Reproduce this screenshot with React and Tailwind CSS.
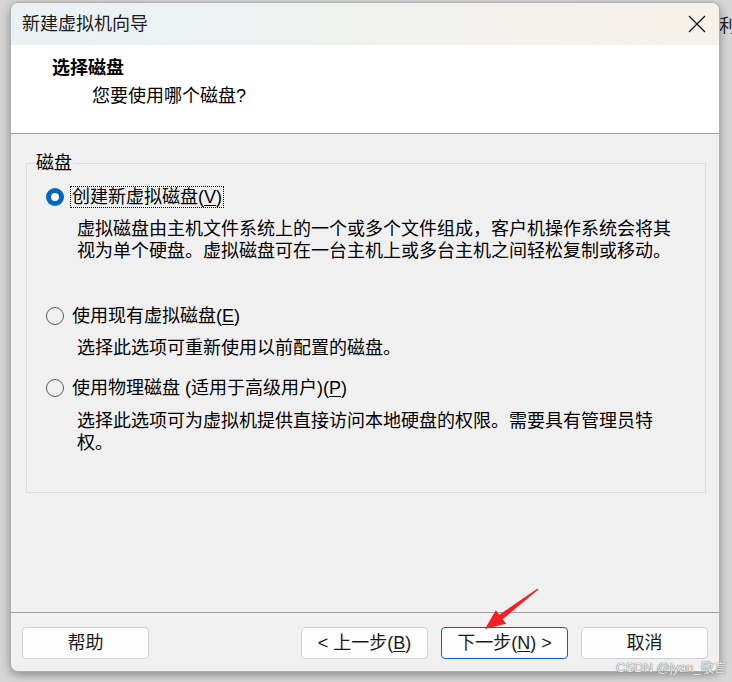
import React from "react";

const font = "font-['Liberation_Sans','Noto_Sans_CJK_SC',sans-serif]";

//单选按钮
const Radio = ({ checked }) =>
  checked ? (
    <span className="w-[18px] h-[18px] rounded-full bg-[#0067c0] flex items-center justify-center shrink-0">
      <span className="w-[8px] h-[8px] rounded-full bg-white" />
    </span>
  ) : (
    <span className="w-[18px] h-[18px] rounded-full border border-[#5c5c5c] shrink-0" />
  );

//选项
const Option = ({ checked, label, keyChar, desc, className, descGap }) => (
  <div className={className}>
    <div className="flex items-center h-[24px] pl-[19px]">
      <Radio checked={checked} />
      <span
        className={`ml-[6px] px-[1px] leading-[20px] border ${
          checked ? "border-dotted border-black" : "border-transparent"
        }`}
      >
        {label}(<span className="underline underline-offset-2">{keyChar}</span>)
      </span>
    </div>
    <p className={`pl-[50px] w-[650px] leading-[22px] ${descGap}`}>{desc}</p>
  </div>
);

const Button = ({ children, primary }) => (
  <button
    className={`w-[127px] h-[32px] rounded-[4px] bg-[#fdfdfd] text-[18px] text-[#1a1a1a] border ${
      primary ? "border-[#0067c0]" : "border-[#d0d0d0]"
    }`}
  >
    {children}
  </button>
);

export default function App() {
  return (
    <div className={`relative w-[732px] h-[682px] overflow-hidden bg-[#d6d6d6] pt-[2px] pl-[10px] ${font} text-black`}>
      {/* 背后窗口的残字 */}
      <span className="absolute left-[719px] top-[14px] text-[18px] leading-[24px] text-[#222]">利</span>

      <div className="relative w-[710px] h-[670px] rounded-[8px] border border-[#b0b0b0] bg-[#f0f0f0] overflow-hidden flex flex-col shadow-[0_3px_10px_rgba(0,0,0,0.35)]">
        {/* 标题栏 */}
        <div className="h-[42px] shrink-0 flex items-center justify-between pl-[11px] pr-[13px] bg-linear-to-r from-[#e9f1f5] to-[#f7f1e9]">
          <span className="text-[18px] text-[#1a1a1a]">新建虚拟机向导</span>
          <svg width="18" height="18" viewBox="0 0 18 18">
            <path d="M1 1 L17 17 M17 1 L1 17" stroke="#1a1a1a" strokeWidth="1.3" fill="none" />
          </svg>
        </div>

        {/* 页头 */}
        <div className="h-[89px] shrink-0 bg-white border-b border-[#a0a0a0] pt-[11px] pl-[41px] text-[18px]">
          <div className="font-bold leading-[24px]">选择磁盘</div>
          <div className="mt-[4px] pl-[40px] leading-[24px]">您要使用哪个磁盘?</div>
        </div>

        {/* 内容 */}
        <div className="flex-1 text-[18px]">
          <fieldset className="mt-[17px] ml-[15px] mr-[13px] h-[342px] border border-[#dcdcdc]">
            <legend className="ml-[8px] px-[1px] leading-[24px]">磁盘</legend>
            <Option
              checked
              className="mt-[10px]"
              descGap="mt-[9px]"
              label="创建新虚拟磁盘"
              keyChar="V"
              desc="虚拟磁盘由主机文件系统上的一个或多个文件组成，客户机操作系统会将其视为单个硬盘。虚拟磁盘可在一台主机上或多台主机之间轻松复制或移动。"
            />
            <Option
              className="mt-[42px]"
              descGap="mt-[9px]"
              label="使用现有虚拟磁盘"
              keyChar="E"
              desc="选择此选项可重新使用以前配置的磁盘。"
            />
            <Option
              className="mt-[17px]"
              descGap="mt-[10px]"
              label="使用物理磁盘 (适用于高级用户)"
              keyChar="P"
              desc="选择此选项可为虚拟机提供直接访问本地硬盘的权限。需要具有管理员特权。"
            />
          </fieldset>
        </div>

        {/* 按钮栏 */}
        <div className="h-[59px] shrink-0 border-t border-[#a0a0a0] pt-[14px] px-[11px] flex">
          <Button>帮助</Button>
          <div className="ml-auto flex gap-[13px]">
            <Button>
              &lt; 上一步(<span className="underline underline-offset-2">B</span>)
            </Button>
            <Button primary>
              下一步(<span className="underline underline-offset-2">N</span>) &gt;
            </Button>
            <Button>取消</Button>
          </div>
        </div>
      </div>

      {/* 红色箭头标注 */}
      <svg className="absolute left-0 top-0 pointer-events-none" width="732" height="682">
        <polygon
          points="537.6,588.4 499.3,614.8 495.8,610.3 485,629 506.2,623.7 502.7,619.2 538.4,589.6"
          fill="#ee2222"
        />
      </svg>

      {/* 水印 */}
      <span className="absolute left-[616px] top-[659px] whitespace-nowrap text-[13px] leading-[18px] text-[#ececec] [text-shadow:0_0_1px_#777,0_0_1px_#777]">
        CSDN @jyan_敬言
      </span>
    </div>
  );
}
